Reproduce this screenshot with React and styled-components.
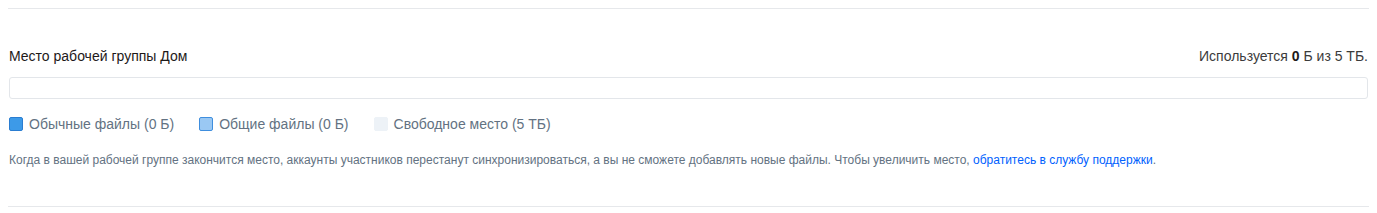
import React from 'react';
import styled, { createGlobalStyle } from 'styled-components';

const GlobalStyle = createGlobalStyle`
    body {
        margin: 8px;
        background: #fff;
        font-family: "Liberation Sans", Arial, sans-serif;
    }
`;

const Section = styled.section`
    border-top: 1px solid #e6e8eb;
    border-bottom: 1px solid #e6e8eb;
    padding: 38px 1px 0;
    height: 159px;
    box-sizing: content-box;
`;

const HeaderRow = styled.div`
    display: flex;
    justify-content: space-between;
    align-items: baseline;
    font-size: 14px;
    line-height: 18px;
    color: #1e1919;
`;

const Usage = styled.span`
    color: #3b3b3b;
    b {
        font-weight: 700;
        color: #1e1919;
    }
`;

const Bar = styled.div`
    margin-top: 12px;
    height: 20px;
    border: 1px solid #e3e6ea;
    border-radius: 3px;
    background: #fff;
`;

const Legend = styled.ul`
    display: flex;
    gap: 25px;
    list-style: none;
    margin: 16px 0 0;
    padding: 0;
    font-size: 14px;
    line-height: 18px;
    color: #637282;
`;

const LegendItem = styled.li`
    display: flex;
    align-items: center;
    gap: 6px;
`;

const Swatch = styled.span`
    width: 12px;
    height: 12px;
    border-radius: 2px;
    background: ${p => p.$fill};
    border: 1px solid ${p => p.$edge};
`;

const Note = styled.p`
    margin: 19px 0 0;
    font-size: 12px;
    line-height: 16px;
    color: #637282;

    a {
        color: #0061fe;
        text-decoration: none;
    }
`;

const legend = [
    { label: 'Обычные файлы (0 Б)', fill: '#3d9ae8', edge: '#2a7dd1' },
    { label: 'Общие файлы (0 Б)', fill: '#9ac8f3', edge: '#3f8ede' },
    { label: 'Свободное место (5 ТБ)', fill: '#edf2f7', edge: '#edf2f7' },
];

const App = () => (
    <>
        <GlobalStyle />
        <Section>
            <HeaderRow>
                <span>Место рабочей группы Дом</span>
                <Usage>Используется <b>0</b> Б из 5 ТБ.</Usage>
            </HeaderRow>
            <Bar />
            <Legend>
                {legend.map(item => (
                    <LegendItem key={item.label}>
                        <Swatch $fill={item.fill} $edge={item.edge} />
                        {item.label}
                    </LegendItem>
                ))}
            </Legend>
            <Note>
                Когда в вашей рабочей группе закончится место, аккаунты участников перестанут синхронизироваться, а вы не сможете добавлять новые файлы. Чтобы увеличить место, <a href="#">обратитесь в службу поддержки</a>.
            </Note>
        </Section>
    </>
);

export default App;
